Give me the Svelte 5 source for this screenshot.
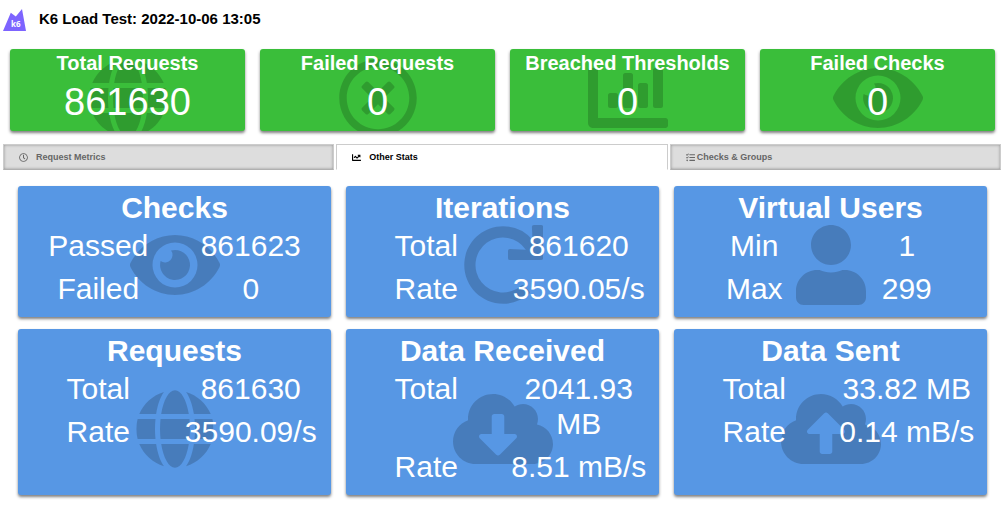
<script>
  const icons = {
    globe: { w: 496, d: 'M336.5 160C322 70.7 287.8 8 248 8s-74 62.7-88.5 152h177zM152 256c0 22.2 1.2 43.5 3.3 64h185.3c2.1-20.5 3.3-41.8 3.3-64s-1.2-43.5-3.3-64H155.3c-2.1 20.5-3.3 41.8-3.3 64zm324.7-96c-28.6-67.9-86.5-120.4-158-141.6 24.4 33.8 41.2 84.7 50 141.6h108zM177.2 18.4C105.8 39.6 47.8 92.1 19.3 160h108c8.7-56.9 25.5-107.8 49.9-141.6zM487.4 192H372.7c2.1 21 3.3 42.5 3.3 64s-1.2 43-3.3 64h114.6c5.5-20.5 8.6-41.8 8.6-64s-3.1-43.5-8.5-64zM120 256c0-21.5 1.2-43 3.3-64H8.6C3.2 212.5 0 233.8 0 256s3.2 43.5 8.6 64h114.6c-2-21-3.2-42.5-3.2-64zm39.5 96c14.5 89.3 48.7 152 88.5 152s74-62.7 88.5-152h-177zm159.3 141.6c71.4-21.2 129.4-73.7 158-141.6h-108c-8.8 56.9-25.6 107.8-50 141.6zM19.3 352c28.6 67.9 86.5 120.4 158 141.6-24.4-33.8-41.2-84.7-50-141.6h-108z' },
    times: { w: 512, d: 'M256 8C119 8 8 119 8 256s111 248 248 248 248-111 248-248S393 8 256 8zm0 448c-110.5 0-200-89.5-200-200S145.5 56 256 56s200 89.5 200 200-89.5 200-200 200zm101.8-262.2L295.6 256l62.2 62.2c4.7 4.7 4.7 12.3 0 17l-22.6 22.6c-4.7 4.7-12.3 4.7-17 0L256 295.6l-62.2 62.2c-4.7 4.7-12.3 4.7-17 0l-22.6-22.6c-4.7-4.7-4.7-12.3 0-17l62.2-62.2-62.2-62.2c-4.7-4.7-4.7-12.3 0-17l22.6-22.6c4.7-4.7 12.3-4.7 17 0l62.2 62.2 62.2-62.2c4.7-4.7 12.3-4.7 17 0l22.6 22.6c4.7 4.7 4.7 12.3 0 17z' },
    bars: { w: 512, d: 'M332.8 320h38.4c6.4 0 12.8-6.4 12.8-12.8V172.8c0-6.4-6.4-12.8-12.8-12.8h-38.4c-6.4 0-12.8 6.4-12.8 12.8v134.4c0 6.4 6.4 12.8 12.8 12.8zm96 0h38.4c6.4 0 12.8-6.4 12.8-12.8V76.8c0-6.4-6.4-12.8-12.8-12.8h-38.4c-6.4 0-12.8 6.4-12.8 12.8v230.4c0 6.4 6.4 12.8 12.8 12.8zm-288 0h38.4c6.4 0 12.8-6.4 12.8-12.8v-70.4c0-6.4-6.4-12.8-12.8-12.8h-38.4c-6.4 0-12.8 6.4-12.8 12.8v70.4c0 6.4 6.4 12.8 12.8 12.8zm96 0h38.4c6.4 0 12.8-6.4 12.8-12.8V108.8c0-6.4-6.4-12.8-12.8-12.8h-38.4c-6.4 0-12.8 6.4-12.8 12.8v198.4c0 6.4 6.4 12.8 12.8 12.8zM496 384H64V80c0-8.84-7.16-16-16-16H16C7.16 64 0 71.16 0 80v336c0 17.67 14.33 32 32 32h464c8.84 0 16-7.16 16-16v-32c0-8.84-7.16-16-16-16z' },
    eye: { w: 576, d: 'M572.52 241.4C518.29 135.59 410.93 64 288 64S57.68 135.64 3.48 241.41a32.35 32.35 0 0 0 0 29.19C57.71 376.41 165.07 448 288 448s230.32-71.64 284.52-177.41a32.35 32.35 0 0 0 0-29.19zM288 400a144 144 0 1 1 144-144 143.93 143.93 0 0 1-144 144zm0-240a95.31 95.31 0 0 0-25.31 3.79 47.85 47.85 0 0 1-66.9 66.9A95.78 95.78 0 1 0 288 160z' },
    redo: { w: 512, d: 'M500.33 0h-47.41a12 12 0 0 0-12 12.57l4 82.76A247.42 247.42 0 0 0 256 8C119.34 8 7.9 119.53 8 256.19 8.1 393.07 119.1 504 256 504a247.1 247.1 0 0 0 166.18-63.91 12 12 0 0 0 .48-17.43l-34-34a12 12 0 0 0-16.38-.55A176 176 0 1 1 402.1 157.8l-101.53-4.87a12 12 0 0 0-12.57 12v47.41a12 12 0 0 0 12 12h200.33a12 12 0 0 0 12-12V12a12 12 0 0 0-12-12z' },
    user: { w: 448, d: 'M224 256c70.7 0 128-57.3 128-128S294.7 0 224 0 96 57.3 96 128s57.3 128 128 128zm89.6 32h-16.7c-22.2 10.2-46.9 16-72.9 16s-50.6-5.8-72.9-16h-16.7C60.2 288 0 348.2 0 422.4V464c0 26.5 21.5 48 48 48h352c26.5 0 48-21.5 48-48v-41.6c0-74.2-60.2-134.4-134.4-134.4z' },
    download: { w: 640, d: 'M537.6 226.6c4.1-10.7 6.4-22.4 6.4-34.6 0-53-43-96-96-96-19.7 0-38.1 6-53.3 16.2C367 64.2 315.3 32 256 32c-88.4 0-160 71.6-160 160 0 2.7.1 5.4.2 8.1C40.2 219.8 0 273.2 0 336c0 79.5 64.5 144 144 144h368c70.7 0 128-57.3 128-128 0-61.9-44-113.6-102.4-125.4zm-132.9 88.7L299.3 420.7c-6.2 6.2-16.4 6.2-22.6 0L171.3 315.3c-10.1-10.1-2.9-27.3 11.3-27.3H248V176c0-8.8 7.2-16 16-16h48c8.8 0 16 7.2 16 16v112h65.4c14.2 0 21.4 17.2 11.3 27.3z' },
    upload: { w: 640, d: 'M537.6 226.6c4.1-10.7 6.4-22.4 6.4-34.6 0-53-43-96-96-96-19.7 0-38.1 6-53.3 16.2C367 64.2 315.3 32 256 32c-88.4 0-160 71.6-160 160 0 2.7.1 5.4.2 8.1C40.2 219.8 0 273.2 0 336c0 79.5 64.5 144 144 144h368c70.7 0 128-57.3 128-128 0-61.9-44-113.6-102.4-125.4zM393.4 288H328v112c0 8.8-7.2 16-16 16h-48c-8.8 0-16-7.2-16-16V288h-65.4c-14.3 0-21.4-17.2-11.3-27.3l105.4-105.4c6.2-6.2 16.4-6.2 22.6 0l105.4 105.4c10.1 10.1 2.9 27.3-11.3 27.3z' },
    clock: { w: 512, d: 'M256 8C119 8 8 119 8 256s111 248 248 248 248-111 248-248S393 8 256 8zm0 448c-110.5 0-200-89.5-200-200S145.5 56 256 56s200 89.5 200 200-89.5 200-200 200zm61.8-104.4l-84.9-61.7c-3.1-2.3-4.9-5.9-4.9-9.7V116c0-6.6 5.4-12 12-12h32c6.6 0 12 5.4 12 12v141.7l66.8 48.6c5.4 3.9 6.5 11.4 2.6 16.8L334.6 349c-3.9 5.3-11.4 6.5-16.8 2.6z' },
    line: { w: 512, d: 'M496 384H64V80c0-8.84-7.16-16-16-16H16C7.16 64 0 71.16 0 80v336c0 17.67 14.33 32 32 32h464c8.84 0 16-7.16 16-16v-32c0-8.84-7.16-16-16-16zM464 96H345.94c-21.38 0-32.09 25.85-16.97 40.97l32.4 32.4L288 242.75l-73.37-73.37c-12.5-12.5-32.76-12.5-45.25 0l-68.69 68.69c-6.25 6.25-6.25 16.38 0 22.63l22.62 22.62c6.25 6.25 16.38 6.25 22.63 0L192 237.25l73.37 73.37c12.5 12.5 32.76 12.5 45.25 0l96-96 32.4 32.4c15.12 15.12 40.97 4.41 40.97-16.97V112c.01-8.84-7.15-16-15.99-16z' },
    tasks: { w: 512, d: 'M139.61 35.5a12 12 0 0 0-17 0L58.93 98.81l-22.7-22.12a12 12 0 0 0-17 0L3.53 92.41a12 12 0 0 0 0 17l47.59 47.4a12.78 12.78 0 0 0 17.61 0l15.59-15.62L156.52 69a12.09 12.09 0 0 0 .09-17zm0 159.19a12 12 0 0 0-17 0l-63.68 63.72-22.7-22.1a12 12 0 0 0-17 0L3.53 252a12 12 0 0 0 0 17L51 316.5a12.77 12.77 0 0 0 17.6 0l15.7-15.69 72.2-72.22a12 12 0 0 0 .09-16.9zM64 368c-26.49 0-48.59 21.5-48.59 48S37.53 464 64 464a48 48 0 0 0 0-96zm432 16H208a16 16 0 0 0-16 16v32a16 16 0 0 0 16 16h288a16 16 0 0 0 16-16v-32a16 16 0 0 0-16-16zm0-320H208a16 16 0 0 0-16 16v32a16 16 0 0 0 16 16h288a16 16 0 0 0 16-16V80a16 16 0 0 0-16-16zm0 160H208a16 16 0 0 0-16 16v32a16 16 0 0 0 16 16h288a16 16 0 0 0 16-16v-32a16 16 0 0 0-16-16z' }
  };

  const summary = [
    { title: 'Total Requests', value: '861630', icon: 'globe' },
    { title: 'Failed Requests', value: '0', icon: 'times' },
    { title: 'Breached Thresholds', value: '0', icon: 'bars' },
    { title: 'Failed Checks', value: '0', icon: 'eye' }
  ];

  const tabs = [
    { label: 'Request Metrics', icon: 'clock' },
    { label: 'Other Stats', icon: 'line' },
    { label: 'Checks & Groups', icon: 'tasks', tight: true }
  ];

  const stats = [
    { title: 'Checks', icon: 'eye', rows: [['Passed', '861623'], ['Failed', '0']] },
    { title: 'Iterations', icon: 'redo', rows: [['Total', '861620'], ['Rate', '3590.05/s']] },
    { title: 'Virtual Users', icon: 'user', rows: [['Min', '1'], ['Max', '299']] },
    { title: 'Requests', icon: 'globe', rows: [['Total', '861630'], ['Rate', '3590.09/s']] },
    { title: 'Data Received', icon: 'download', rows: [['Total', '2041.93 MB'], ['Rate', '8.51 mB/s']] },
    { title: 'Data Sent', icon: 'upload', rows: [['Total', '33.82 MB'], ['Rate', '0.14 mB/s']] }
  ];

  let active = $state(1);
</script>

{#snippet glyph(name, cls)}
  <svg class={cls} viewBox="0 0 {icons[name].w} 512" aria-hidden="true"><path d={icons[name].d} /></svg>
{/snippet}

<main>
  <header>
    <svg class="logo" viewBox="0 0 23 22" aria-hidden="true">
      <path fill="#7d64ff" d="M0 22 7.8 3.800 12.800 7.500 19 0l4 22z" />
      <text x="8" y="18">k6</text>
    </svg>
    <h1>K6 Load Test: 2022-10-06 13:05</h1>
  </header>

  <section class="summary">
    {#each summary as s}
      <article class="box good">
        {@render glyph(s.icon, 'backdrop')}
        <h2>{s.title}</h2>
        <div class="bignum">{s.value}</div>
      </article>
    {/each}
  </section>

  <div class="tabs" role="tablist">
    {#each tabs as t, i}
      <button type="button" role="tab" class:tight={t.tight} aria-selected={active === i} onclick={() => (active = i)}>
        {@render glyph(t.icon, 'small')}<span>{t.label}</span>
      </button>
    {/each}
  </div>

  <section class="stats">
    {#each stats as s}
      <article class="box info">
        {@render glyph(s.icon, 'backdrop')}
        <h2>{s.title}</h2>
        <dl>
          {#each s.rows as [k, v]}
            <dt>{k}</dt>
            <dd>{v}</dd>
          {/each}
        </dl>
      </article>
    {/each}
  </section>
</main>

<style>
  :global(body) {
    margin: 0;
    background: #fff;
    font-family: "Liberation Sans", Arial, sans-serif;
  }
  main {
    padding: 8px 1px 8px 3px;
  }
  header {
    display: flex;
    align-items: center;
    gap: 13px;
    height: 23px;
  }
  .logo {
    width: 23px;
    height: 22px;
  }
  .logo text {
    font: bold 8px "Noto Sans", sans-serif;
    fill: #fff;
  }
  h1 {
    margin: 0;
    padding-bottom: 2px;
    font-size: 15px;
    line-height: 20px;
    color: #000;
  }
  .summary {
    display: grid;
    grid-template-columns: repeat(4, 1fr);
    gap: 15px;
    padding: 18px 6px 13px 7px;
  }
  .box {
    position: relative;
    overflow: hidden;
    border-radius: 3px;
    color: #fff;
    text-align: center;
    box-shadow: 0 2px 3px rgba(0, 0, 0, 0.5);
  }
  .box h2 {
    position: relative;
    margin: 0;
    font-weight: bold;
  }
  .backdrop {
    position: absolute;
    top: 60%;
    left: 50%;
    height: 80px;
    transform: translate(-50%, -50%);
    fill: rgba(0, 0, 0, 0.176);
  }
  .good {
    padding: 2px 4px;
    background: #3abe3a;
  }
  .good h2 {
    font-size: 20px;
    line-height: 24px;
  }
  .bignum {
    position: relative;
    font-size: 38px;
    line-height: 54px;
  }
  .tabs {
    display: grid;
    grid-template-columns: repeat(3, 1fr);
    gap: 2px;
  }
  button {
    display: flex;
    align-items: center;
    gap: 8px;
    height: 26px;
    padding: 0 15px;
    border: 1px solid #ccc;
    border-bottom-color: #b0b0b0;
    background: #ddd;
    box-shadow: inset 0 0 3px rgba(0, 0, 0, 0.35);
    color: #666;
    font: bold 9px "Liberation Sans", Arial, sans-serif;
  }
  button.tight {
    gap: 2px;
  }
  button[aria-selected="true"] {
    border-bottom-color: #fff;
    background: #fff;
    box-shadow: none;
    color: #000;
  }
  .small {
    width: 9px;
    height: 9px;
    fill: currentColor;
  }
  .stats {
    display: grid;
    grid-template-columns: repeat(3, 1fr);
    gap: 12px 15px;
    padding: 16px 14px 0 15px;
  }
  .info {
    padding: 4px 4px 8px;
    background: #5797e4;
    font-size: 30px;
    line-height: 35px;
  }
  .info h2 {
    font-size: 30px;
  }
  dl {
    position: relative;
    display: grid;
    grid-template-columns: 1fr 1fr;
    row-gap: 8px;
    margin: 0;
    padding: 3px 0;
  }
  dt,
  dd {
    margin: 0;
  }
</style>
